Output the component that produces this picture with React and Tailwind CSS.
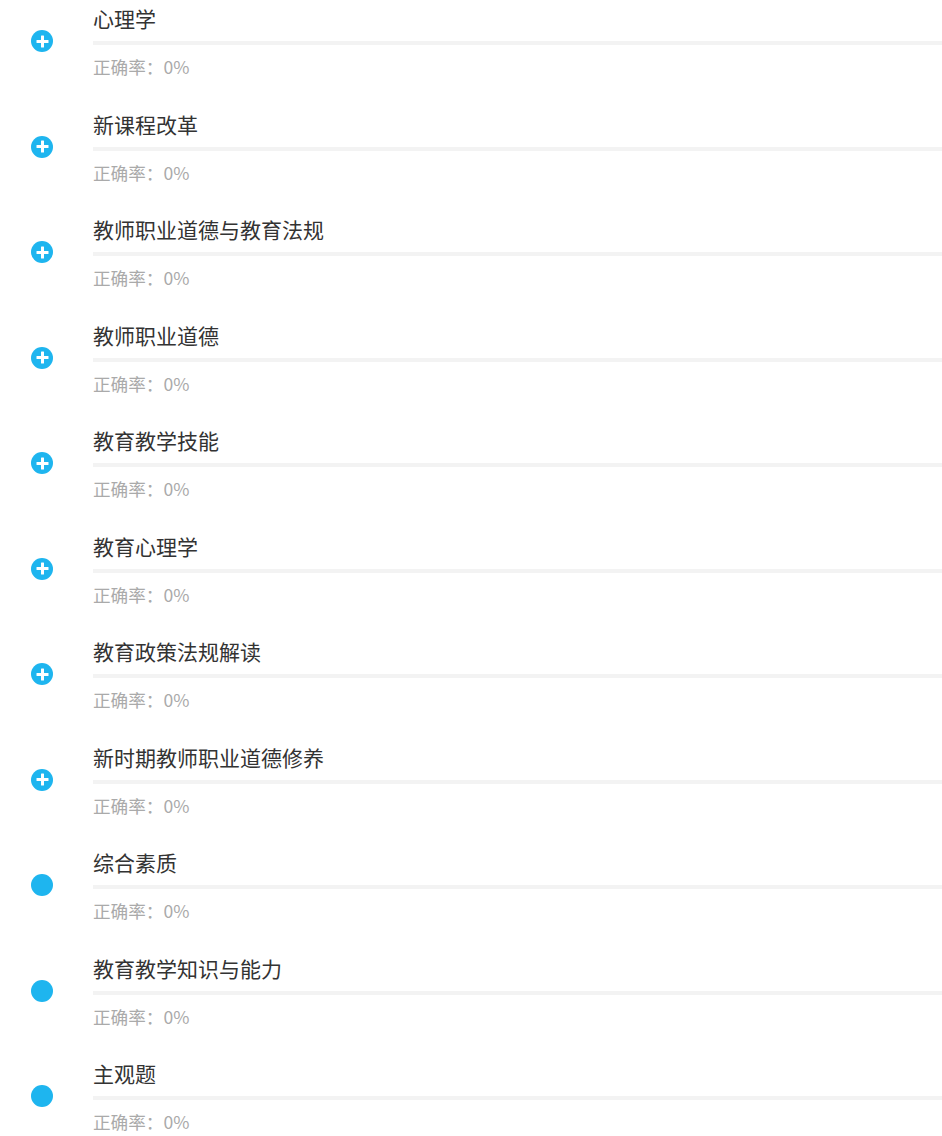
import React from "react";

const items = [
  { name: "心理学", plus: true },
  { name: "新课程改革", plus: true },
  { name: "教师职业道德与教育法规", plus: true },
  { name: "教师职业道德", plus: true },
  { name: "教育教学技能", plus: true },
  { name: "教育心理学", plus: true },
  { name: "教育政策法规解读", plus: true },
  { name: "新时期教师职业道德修养", plus: true },
  { name: "综合素质", plus: false },
  { name: "教育教学知识与能力", plus: false },
  { name: "主观题", plus: false },
];

function Icon({ plus }) {
  return (
    <div className="w-[22px] h-[22px] rounded-full bg-[#1eb5ef] flex items-center justify-center">
      {plus && (
        <svg width="13" height="13" viewBox="0 0 13 13">
          <rect x="0.5" y="5" width="12" height="3" rx="0.5" fill="#fff" />
          <rect x="5" y="0.5" width="3" height="12" rx="0.5" fill="#fff" />
        </svg>
      )}
    </div>
  );
}

export default function App() {
  return (
    <div
      className="w-[942px] bg-white"
      style={{ fontFamily: '"Noto Sans CJK SC", "Noto Sans", sans-serif' }}
    >
      {items.map((it, i) => (
        <div key={i} className="flex h-[105.5px]">
          <div className="w-[93px] shrink-0 pl-[31px] pt-[30px]">
            <Icon plus={it.plus} />
          </div>
          <div className="flex-1 flex flex-col pt-[3px]">
            <div className="text-[21px] leading-[30px] text-[#333]">{it.name}</div>
            <div className="mt-[8px] h-[4px] bg-[#f3f3f3]" />
            <div className="mt-[10px] text-[17.6px] leading-[24px] text-[#aaa]">正确率：0%</div>
          </div>
        </div>
      ))}
    </div>
  );
}
